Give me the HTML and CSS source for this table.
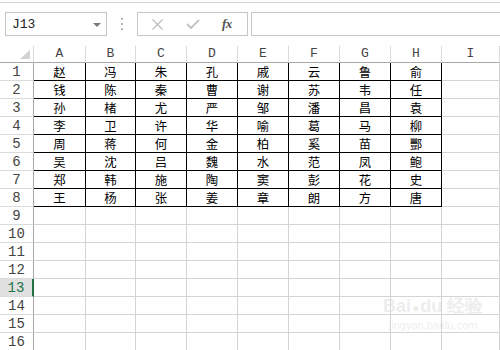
FILE: index.html
```html
<!DOCTYPE html>
<html lang="zh">
<head>
<meta charset="utf-8">
<title>Sheet</title>
<link rel="stylesheet" href="styles.css">
</head>
<body>
<div class="app">
  <div class="top-line"></div>
  <div class="toolbar">
    <div class="namebox"><span class="name">J13</span><span class="arrow"></span></div>
    <div class="dots"><i></i><i></i><i></i></div>
    <div class="fbtns">
      <svg class="ic-x" width="11" height="11" viewBox="0 0 11 11"><path d="M0.5 0.5L10.5 10.5M10.5 0.5L0.5 10.5" stroke="#bdbdbd" stroke-width="1.3" fill="none"/></svg>
      <svg class="ic-ok" width="14" height="10" viewBox="0 0 14 10"><path d="M1 5L5 9L13 1" stroke="#c4c4c4" stroke-width="2" fill="none"/></svg>
      <span class="fx">fx</span>
    </div>
    <div class="finput"></div>
  </div>
  <div class="sheet">
    <div class="corner"><span class="tri"></span></div>
    <div class="ch">A</div><div class="ch">B</div><div class="ch">C</div><div class="ch">D</div><div class="ch">E</div><div class="ch">F</div><div class="ch">G</div><div class="ch">H</div><div class="ch">I</div>

    <div class="rh">1</div><div class="c t">赵</div><div class="c t">冯</div><div class="c t">朱</div><div class="c t">孔</div><div class="c t">戚</div><div class="c t">云</div><div class="c t">鲁</div><div class="c t">俞</div><div class="c"></div>
    <div class="rh">2</div><div class="c t">钱</div><div class="c t">陈</div><div class="c t">秦</div><div class="c t">曹</div><div class="c t">谢</div><div class="c t">苏</div><div class="c t">韦</div><div class="c t">任</div><div class="c"></div>
    <div class="rh">3</div><div class="c t">孙</div><div class="c t">楮</div><div class="c t">尤</div><div class="c t">严</div><div class="c t">邹</div><div class="c t">潘</div><div class="c t">昌</div><div class="c t">袁</div><div class="c"></div>
    <div class="rh">4</div><div class="c t">李</div><div class="c t">卫</div><div class="c t">许</div><div class="c t">华</div><div class="c t">喻</div><div class="c t">葛</div><div class="c t">马</div><div class="c t">柳</div><div class="c"></div>
    <div class="rh">5</div><div class="c t">周</div><div class="c t">蒋</div><div class="c t">何</div><div class="c t">金</div><div class="c t">柏</div><div class="c t">奚</div><div class="c t">苗</div><div class="c t">酆</div><div class="c"></div>
    <div class="rh">6</div><div class="c t">吴</div><div class="c t">沈</div><div class="c t">吕</div><div class="c t">魏</div><div class="c t">水</div><div class="c t">范</div><div class="c t">凤</div><div class="c t">鲍</div><div class="c"></div>
    <div class="rh">7</div><div class="c t">郑</div><div class="c t">韩</div><div class="c t">施</div><div class="c t">陶</div><div class="c t">窦</div><div class="c t">彭</div><div class="c t">花</div><div class="c t">史</div><div class="c"></div>
    <div class="rh">8</div><div class="c t">王</div><div class="c t">杨</div><div class="c t">张</div><div class="c t">姜</div><div class="c t">章</div><div class="c t">朗</div><div class="c t">方</div><div class="c t">唐</div><div class="c"></div>
    <div class="rh">9</div><div class="c"></div><div class="c"></div><div class="c"></div><div class="c"></div><div class="c"></div><div class="c"></div><div class="c"></div><div class="c"></div><div class="c"></div>
    <div class="rh">10</div><div class="c"></div><div class="c"></div><div class="c"></div><div class="c"></div><div class="c"></div><div class="c"></div><div class="c"></div><div class="c"></div><div class="c"></div>
    <div class="rh">11</div><div class="c"></div><div class="c"></div><div class="c"></div><div class="c"></div><div class="c"></div><div class="c"></div><div class="c"></div><div class="c"></div><div class="c"></div>
    <div class="rh">12</div><div class="c"></div><div class="c"></div><div class="c"></div><div class="c"></div><div class="c"></div><div class="c"></div><div class="c"></div><div class="c"></div><div class="c"></div>
    <div class="rh sel">13</div><div class="c"></div><div class="c"></div><div class="c"></div><div class="c"></div><div class="c"></div><div class="c"></div><div class="c"></div><div class="c"></div><div class="c"></div>
    <div class="rh">14</div><div class="c"></div><div class="c"></div><div class="c"></div><div class="c"></div><div class="c"></div><div class="c"></div><div class="c"></div><div class="c"></div><div class="c"></div>
    <div class="rh">15</div><div class="c"></div><div class="c"></div><div class="c"></div><div class="c"></div><div class="c"></div><div class="c"></div><div class="c"></div><div class="c"></div><div class="c"></div>
    <div class="rh">16</div><div class="c"></div><div class="c"></div><div class="c"></div><div class="c"></div><div class="c"></div><div class="c"></div><div class="c"></div><div class="c"></div><div class="c"></div>
  </div>
  <div class="watermark"><span class="wm-logo">Bai<span class="paw">●</span>du 经验</span><span class="wm-url">jingyan.baidu.com</span></div>
</div>
</body>
</html>
```

FILE: styles.css
```css
html, body {
  margin: 0;
  padding: 0;
  background: #fff;
  overflow: hidden;
}
.app {
  position: relative;
  width: 500px;
  height: 350px;
  overflow: hidden;
  font-family: "Liberation Mono", "DejaVu Sans Mono", monospace;
}
.top-line {
  height: 1px;
  margin-top: 2px;
  background: #d4d4d4;
}
.toolbar {
  display: flex;
  align-items: center;
  height: 24px;
  padding: 9px 0 0 5px;
  overflow: hidden;
}
.toolbar > * {
  flex-shrink: 0;
}
.namebox {
  box-sizing: border-box;
  width: 102px;
  height: 24px;
  border: 1px solid #c6c6c6;
  display: flex;
  align-items: center;
  justify-content: space-between;
  padding: 0 5px 0 6px;
}
.name {
  font-size: 13px;
  color: #222;
}
.arrow {
  width: 0;
  height: 0;
  border-left: 4px solid transparent;
  border-right: 4px solid transparent;
  border-top: 4px solid #7a7a7a;
  margin-top: 1px;
}
.dots {
  width: 30px;
  display: flex;
  flex-direction: column;
  align-items: center;
  gap: 3px;
}
.dots i {
  display: block;
  width: 2px;
  height: 2px;
  background: #b5b5b5;
}
.fbtns {
  box-sizing: border-box;
  width: 111px;
  height: 24px;
  border: 1px solid #c6c6c6;
  display: flex;
  align-items: center;
  padding-left: 14px;
}
.ic-x { margin-right: 23px; }
.ic-ok { margin-right: 22px; }
.fx {
  font-family: "Liberation Serif", "DejaVu Serif", serif;
  font-style: italic;
  font-weight: bold;
  font-size: 13px;
  color: #505050;
  letter-spacing: -0.5px;
}
.finput {
  box-sizing: border-box;
  margin-left: 3px;
  width: 260px;
  height: 24px;
  border: 1px solid #c6c6c6;
}
.sheet {
  margin-top: 10px;
  display: grid;
  grid-template-columns: 34px 52px 50px repeat(6, 51px) 1fr;
  grid-template-rows: 17px repeat(16, 18px);
}
.sheet > div {
  box-sizing: border-box;
}
.corner {
  border-right: 1px solid #d8d8d8;
  border-bottom: 1px solid #a9a9a9;
  position: relative;
}
.tri {
  position: absolute;
  right: 3px;
  bottom: 3px;
  width: 10px;
  height: 9px;
  background: #d2d2d2;
  clip-path: polygon(100% 0, 100% 100%, 0 100%);
}
.ch {
  border-right: 1px solid #dadada;
  border-bottom: 1px solid #a9a9a9;
  font-size: 13px;
  color: #444;
  text-align: center;
  line-height: 16px;
}
.rh {
  border-right: 1px solid #a9a9a9;
  border-bottom: 1px solid #dadada;
  font-size: 14px;
  color: #444;
  text-align: center;
  line-height: 18px;
}
.rh.sel {
  background: #e1e1e1;
  color: #217346;
  border-right: 2px solid #217346;
}
.c {
  border-right: 1px solid #d4d4d4;
  border-bottom: 1px solid #d4d4d4;
  font-family: "Noto Sans CJK SC", sans-serif;
  font-size: 12.4px;
  color: #000;
  text-align: center;
  line-height: 18px;
  overflow: hidden;
}
.c.t {
  border-right-color: #000;
  border-bottom-color: #000;
}
.watermark {
  position: absolute;
  left: 383px;
  top: 296px;
  display: flex;
  flex-direction: column;
  align-items: center;
  color: rgba(215, 215, 215, 0.45);
  font-family: "Liberation Sans", sans-serif;
  pointer-events: none;
}
.wm-logo {
  font-size: 18px;
  font-weight: bold;
  line-height: 20px;
}
.paw {
  font-size: 12px;
  margin: 0 1px;
}
.wm-url {
  font-size: 11px;
  line-height: 14px;
}
```
